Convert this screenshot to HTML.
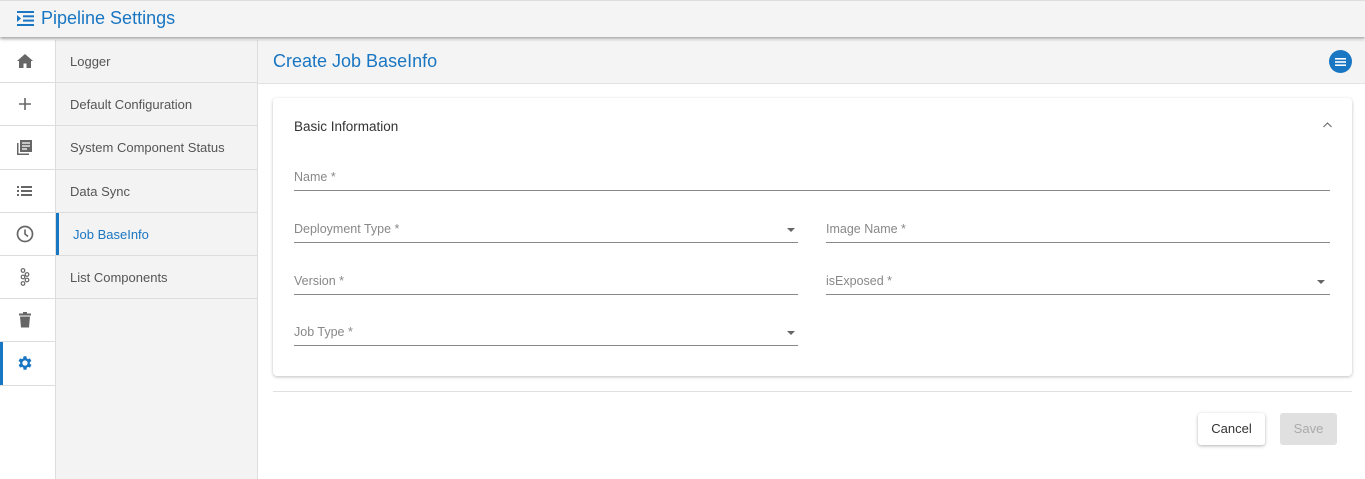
<!DOCTYPE html>
<html><head><style>
*{box-sizing:border-box;margin:0;padding:0}
body{width:1365px;height:479px;overflow:hidden;background:#fff;font-family:"Liberation Sans",sans-serif;position:relative}
.top{position:absolute;left:0;top:0;width:1365px;height:37px;background:#f4f4f4;box-shadow:0 2px 3px rgba(0,0,0,.35);z-index:2;border-top:1px solid #ddd}
.top span{position:absolute;left:41px;top:7px;font-size:18px;color:#1976c2}
.ic{position:absolute;left:0;top:40px;width:56px;height:439px;background:#fff;border-right:1px solid #ddd}
.ic div{height:43.2px;border-bottom:1px solid #ddd;display:flex;align-items:center;justify-content:center;position:relative;padding-right:6px}
.sub{position:absolute;left:56px;top:40px;width:202px;height:439px;background:#f3f3f3;border-right:1px solid #ddd}
.sub div{height:43.2px;border-bottom:1px solid #ddd;padding-left:14px;line-height:43px;font-size:13px;color:#555;position:relative}
.sub .act{color:#1976c2;padding-left:17px}
.sub .act:before,.ic .act:before{content:"";position:absolute;left:0;top:0;bottom:0;width:3px;background:#1976c2}
.mh{position:absolute;left:258px;top:40px;width:1107px;height:44px;background:#f4f4f4;border-bottom:1px solid #e3e3e3}
.mh span{position:absolute;left:15px;top:11px;font-size:18px;color:#1976c2}
.fab{position:absolute;right:13px;top:10px;width:23px;height:23px;border-radius:50%;background:#1976c2}
.card{position:absolute;left:273px;top:98px;width:1079px;height:278px;background:#fff;border-radius:4px;box-shadow:0 1px 3px rgba(0,0,0,.25)}
.lbl{position:absolute;font-size:12.5px;color:#888}
.ln{position:absolute;height:1px;background:#888}
.arr{position:absolute;width:0;height:0;border-left:4.5px solid transparent;border-right:4.5px solid transparent;border-top:4.5px solid #666}
</style></head><body>
<div class="top"><svg style="position:absolute;left:17px;top:10px" width="17" height="15" viewBox="0 0 17 15"><g fill="#1976c2"><rect x="0" y="0" width="17" height="2"/><rect x="6" y="4.3" width="11" height="2"/><rect x="6" y="8.6" width="11" height="2"/><rect x="0" y="13" width="17" height="2"/><path d="M0 4l4 3.5L0 11z"/></g></svg><span>Pipeline Settings</span></div>
<div class="ic">
<div><svg width="16" height="14" viewBox="0 0 16 14"><path d="M8 0L0 7h2v7h4.5V9.5h3V14H14V7h2z" fill="#666"/></svg></div>
<div><svg width="12" height="12"><path d="M6 0v12M0 6h12" stroke="#666" stroke-width="1.6"/></svg></div>
<div><svg width="17" height="17" viewBox="0 0 17 17"><path d="M1 4v12h12v-1.5H2.5V4z" fill="#666"/><rect x="4" y="1" width="12" height="12" fill="#666"/><path d="M6 4h8M6 7h8M6 10h5" stroke="#fff" stroke-width="1.3"/></svg></div>
<div><svg width="15" height="10" viewBox="0 0 15 10"><g fill="#666"><rect x="0" y="0" width="2" height="2"/><rect x="0" y="4" width="2" height="2"/><rect x="0" y="8" width="2" height="2"/><rect x="4" y="0" width="11" height="2"/><rect x="4" y="4" width="11" height="2"/><rect x="4" y="8" width="11" height="2"/></g></svg></div>
<div><svg width="18" height="18"><circle cx="9" cy="9" r="7.5" fill="none" stroke="#666" stroke-width="1.7"/><path d="M9 4.5V9l3 2.5" fill="none" stroke="#666" stroke-width="1.6"/></svg></div>
<div><svg width="10" height="18" viewBox="0 0 10 18" fill="none" stroke="#666" stroke-width="1.2"><circle cx="3" cy="2.5" r="1.8"/><circle cx="7" cy="6.5" r="1.8"/><circle cx="3" cy="9" r="1.8"/><circle cx="7" cy="12" r="1.8"/><circle cx="3" cy="15.5" r="1.8"/></svg></div>
<div><svg width="12" height="16" viewBox="0 0 12 16"><rect x="0" y="1.5" width="12" height="2" fill="#666"/><rect x="4" y="0" width="4" height="2" fill="#666"/><path d="M1 4.5h10l-1 11H2z" fill="#666"/></svg></div>
<div class="act"><svg width="18" height="18" viewBox="0 0 24 24"><path fill="#1976c2" d="M19.4 13a7.5 7.5 0 000-2l2.1-1.6-2-3.5-2.5 1a7 7 0 00-1.7-1L15 3h-4l-.4 2.9a7 7 0 00-1.7 1l-2.5-1-2 3.5L6.6 11a7.5 7.5 0 000 2l-2.1 1.6 2 3.5 2.5-1a7 7 0 001.7 1L11 21h4l.4-2.9a7 7 0 001.7-1l2.5 1 2-3.5zM13 15.5a3.5 3.5 0 110-7 3.5 3.5 0 010 7z" transform="translate(-1 0)"/></svg></div>
</div>
<div class="sub">
<div>Logger</div><div>Default Configuration</div><div>System Component Status</div><div>Data Sync</div><div class="act">Job BaseInfo</div><div>List Components</div>
</div>
<div class="mh"><span>Create Job BaseInfo</span><div class="fab"><svg style="position:absolute;left:6px;top:7.5px" width="11" height="8"><g fill="#fff"><rect x="0" y="0" width="11" height="1.6"/><rect x="0" y="3.2" width="11" height="1.6"/><rect x="0" y="6.4" width="11" height="1.6"/></g></svg></div></div>
<div class="card">
<div style="position:absolute;left:21px;top:21px;font-size:13.5px;color:#333">Basic Information</div>
<svg style="position:absolute;left:1050px;top:24px" width="9" height="6"><path d="M.5 5L4.5 1l4 4" fill="none" stroke="#666" stroke-width="1.1"/></svg>
<div class="lbl" style="left:21px;top:72px">Name *</div><div class="ln" style="left:21px;top:92px;width:1036px"></div>
<div class="lbl" style="left:21px;top:124px">Deployment Type *</div><div class="arr" style="left:514px;top:130px"></div><div class="ln" style="left:21px;top:144px;width:504px"></div>
<div class="lbl" style="left:553px;top:124px">Image Name *</div><div class="ln" style="left:553px;top:144px;width:504px"></div>
<div class="lbl" style="left:21px;top:176px">Version *</div><div class="ln" style="left:21px;top:196px;width:504px"></div>
<div class="lbl" style="left:553px;top:176px">isExposed *</div><div class="arr" style="left:1044px;top:182px"></div><div class="ln" style="left:553px;top:196px;width:504px"></div>
<div class="lbl" style="left:21px;top:227px">Job Type *</div><div class="arr" style="left:514px;top:233px"></div><div class="ln" style="left:21px;top:247px;width:504px"></div>
</div>
<div style="position:absolute;left:273px;top:391px;width:1079px;height:1px;background:#e0e0e0"></div>
<div style="position:absolute;left:1198px;top:413px;width:67px;height:32px;background:#fff;border-radius:3px;box-shadow:0 1px 3px rgba(0,0,0,.3);font-size:13px;color:#333;text-align:center;line-height:32px">Cancel</div>
<div style="position:absolute;left:1280px;top:413px;width:57px;height:32px;background:#e0e0e0;border-radius:3px;font-size:13px;color:#aaa;text-align:center;line-height:32px">Save</div>
</body></html>
